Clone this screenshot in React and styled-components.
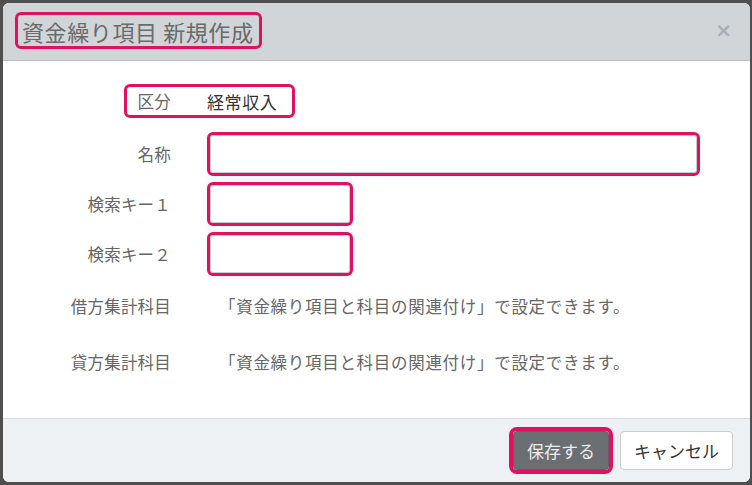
import React from "react";
import styled, { createGlobalStyle } from "styled-components";

const PINK = "#e0115f";

const Global = createGlobalStyle`
  html, body { margin: 0; padding: 0; background: #4f4f4f; }
  body { font-family: "Noto Sans CJK JP", "Noto Sans", sans-serif; }
  #root { padding: 3px 2px 3px 3px; }
`;

const Modal = styled.div`
  width: 747px;
  height: 479px;
  background: #fff;
  border-radius: 6px;
  overflow: hidden;
  display: flex;
  flex-direction: column;
`;

const Header = styled.div`
  height: 58px;
  box-sizing: border-box;
  background: #d1d5d8;
  border-bottom: 1px solid #bcc0c4;
  display: flex;
  align-items: flex-start;
  justify-content: space-between;
  padding: 9px 18px 0 12px;
`;

const Title = styled.h4`
  margin: 0;
  border: 3px solid ${PINK};
  border-radius: 6px;
  padding: 0 5px 0 4px;
  height: 31px;
  display: flex;
  align-items: center;
  font-size: 22px;
  font-weight: 400;
  color: #6a6a6a;
  letter-spacing: 0.6px;
`;

const Close = styled.span`
  font-family: "DejaVu Sans", sans-serif;
  font-size: 20px;
  font-weight: 700;
  color: #abafb2;
  line-height: 1;
  margin-top: 8px;
`;

const Body = styled.div`
  flex: 1;
  padding-top: 23px;
  display: flex;
  flex-direction: column;
`;

const Row = styled.div`
  position: relative;
  display: grid;
  grid-template-columns: 168px 1fr;
  column-gap: 36px;
  align-items: center;
  min-height: ${(p) => p.$h}px;
  margin-top: ${(p) => p.$mt || 0}px;
`;

const Label = styled.div`
  text-align: right;
  font-size: 16.5px;
  color: #666;
  letter-spacing: 0.2px;
`;

const Value = styled.div`
  font-size: 17px;
  color: #333;
  letter-spacing: 0.6px;
`;

const Note = styled.div`
  font-size: 16.5px;
  color: #666;
  padding-left: 12px;
  letter-spacing: 0.7px;
`;

const RowMark = styled.div`
  position: absolute;
  left: 121px;
  top: 0;
  width: 171px;
  height: 34px;
  box-sizing: border-box;
  border: 3px solid ${PINK};
  border-radius: 6px;
  pointer-events: none;
`;

const Input = styled.input`
  box-sizing: border-box;
  width: ${(p) => p.$w}px;
  height: 38px;
  margin: 3px;
  border: 1px solid #ccc;
  border-radius: 3px;
  outline: 3px solid ${PINK};
  outline-offset: 0;
  background: #fff;
  box-shadow: 0 0 6px 4px rgba(200, 215, 240, 0.25);
`;

const Footer = styled.div`
  height: 64px;
  box-sizing: border-box;
  border-top: 1px solid #d9dde1;
  background: #eef1f4;
  display: flex;
  align-items: center;
  justify-content: flex-end;
  gap: 11px;
  padding: 0 17px 1px 0;
`;

const Button = styled.button`
  box-sizing: border-box;
  height: 39px;
  width: ${(p) => p.$w}px;
  border-radius: 4px;
  font-family: "Noto Sans CJK JP", sans-serif;
  font-size: 17px;
  border: 1px solid ${(p) => (p.$primary ? "#5f6265" : "#ccc")};
  background: ${(p) => (p.$primary ? "#6c6f72" : "#fff")};
  color: ${(p) => (p.$primary ? "#ececec" : "#333")};
  outline: ${(p) => (p.$primary ? `4px solid ${PINK}` : "none")};
  outline-offset: 0;
  padding: 0;
`;

export default function App() {
  return (
    <>
      <Global />
      <Modal>
        <Header>
          <Title>資金繰り項目 新規作成</Title>
          <Close>×</Close>
        </Header>
        <Body>
          <Row $h={34}>
            <Label>区分</Label>
            <Value>経常収入</Value>
            <RowMark />
          </Row>
          <Row $h={44} $mt={14}>
            <Label>名称</Label>
            <div><Input $w={487} /></div>
          </Row>
          <Row $h={44} $mt={6}>
            <Label>検索キー１</Label>
            <div><Input $w={140} /></div>
          </Row>
          <Row $h={44} $mt={6}>
            <Label>検索キー２</Label>
            <div><Input $w={140} /></div>
          </Row>
          <Row $h={34} $mt={13}>
            <Label>借方集計科目</Label>
            <Note>「資金繰り項目と科目の関連付け」で設定できます。</Note>
          </Row>
          <Row $h={34} $mt={22}>
            <Label>貸方集計科目</Label>
            <Note>「資金繰り項目と科目の関連付け」で設定できます。</Note>
          </Row>
        </Body>
        <Footer>
          <Button $primary $w={96}>保存する</Button>
          <Button $w={113}>キャンセル</Button>
        </Footer>
      </Modal>
    </>
  );
}
